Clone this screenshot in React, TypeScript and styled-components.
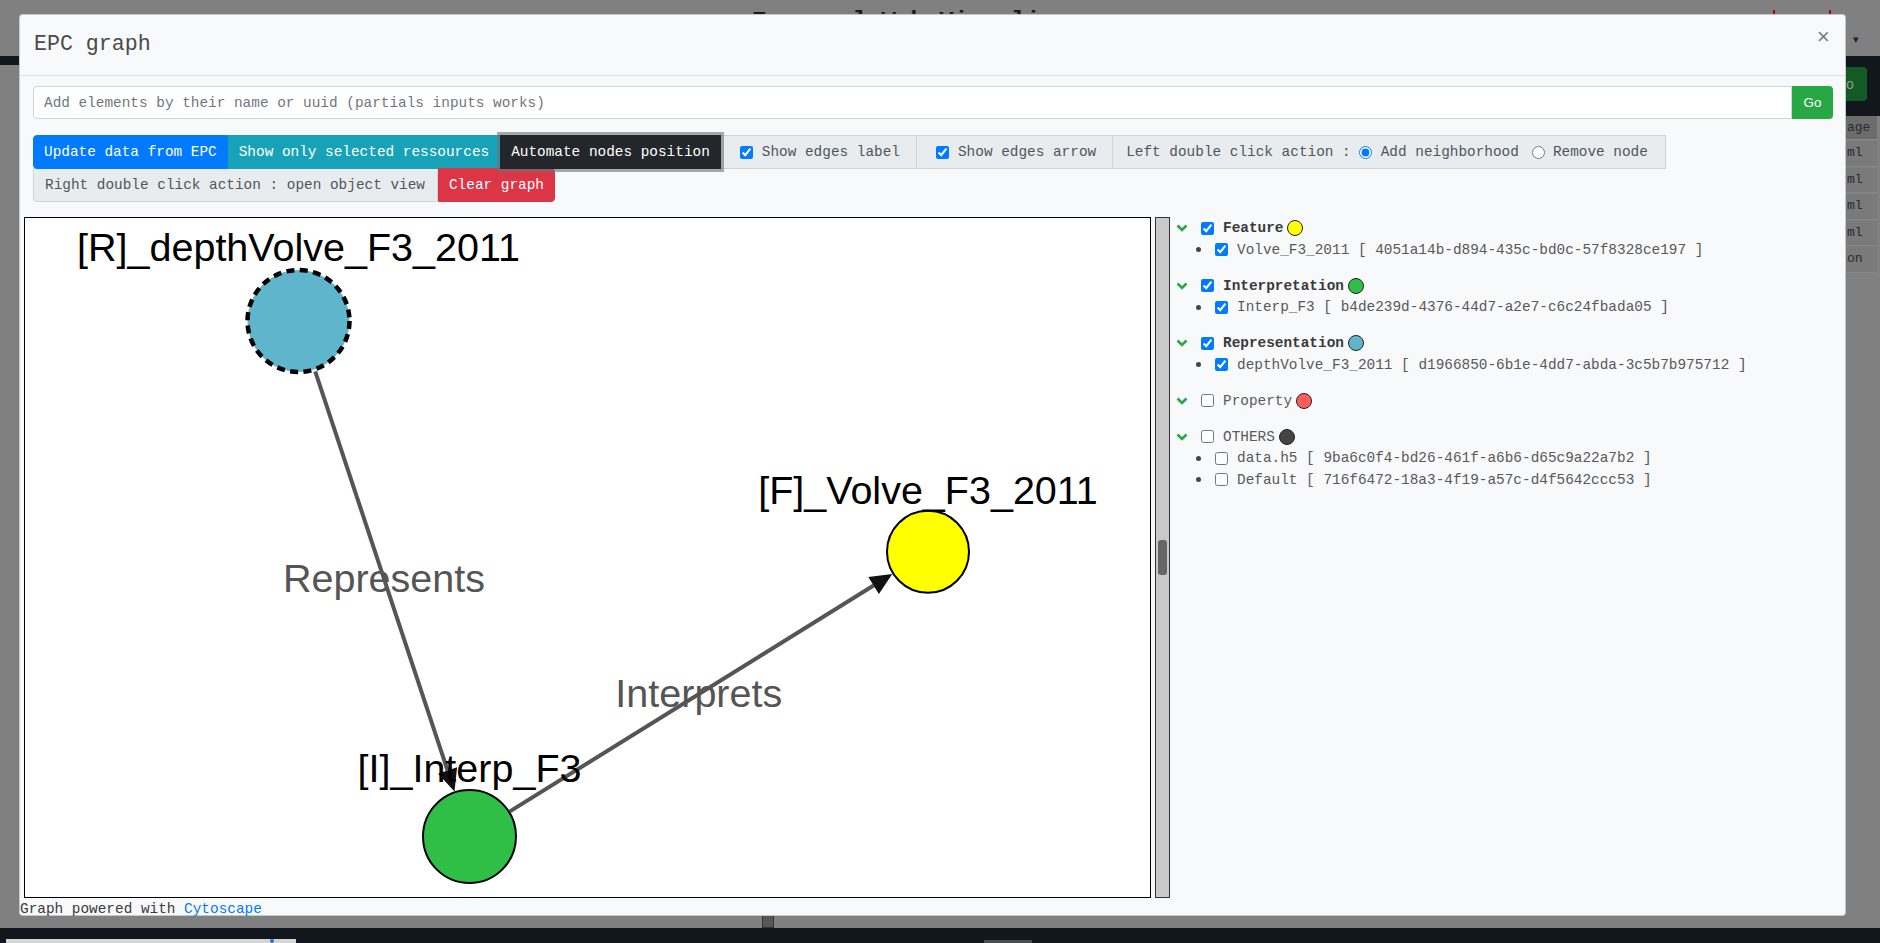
import React from "react";
import styled, { createGlobalStyle } from "styled-components";

const MONO = `"Liberation Mono", "DejaVu Sans Mono", monospace`;
const SANS = `"Liberation Sans", Arial, sans-serif`;
const DARK = "#12161d";

const GlobalStyle = createGlobalStyle`
  html, body { margin: 0; padding: 0; }
  body { font-family: ${MONO}; font-size: 14.4px; overflow: hidden; background: #808080; }
  *, *::before, *::after { box-sizing: border-box; }
`;

/* ---------- page behind the dialog ---------- */
const Page = styled.div`
  position: relative;
  width: 100vw;
  height: 943px;
  background: #808080;
  display: flex;
  flex-direction: column;
  overflow: hidden;
`;
const BackHeader = styled.div`
  height: 56px;
  display: flex;
  align-items: flex-start;
  padding-top: 10px;
`;
const BackTitle = styled.div`
  margin-left: 752px;
  font: bold 24px/1 ${MONO};
  color: #1b1b1b;
  white-space: nowrap;
`;
const BackRight = styled.div`
  margin-left: auto;
  width: 110px;
  display: flex;
  align-items: flex-start;
`;
const RedBar = styled.div<{ $ml: number }>`
  width: 2px;
  height: 6px;
  margin-top: 0;
  margin-left: ${(p) => p.$ml}px;
  background: #b00000;
`;
const Caret = styled.div`
  margin-left: 22px;
  margin-top: 24px;
  font: 11px/1 ${SANS};
  color: #222;
`;
const BackNavLine = styled.div`
  height: 9px;
  background: ${DARK};
`;
const BackMain = styled.div`
  flex: 1;
  display: flex;
  flex-direction: column;
`;
const BackMainTop = styled.div`
  flex: 1;
  display: flex;
`;
const BackFill = styled.div`
  flex: 1;
`;
const BackSide = styled.div`
  width: 34px;
  display: flex;
  flex-direction: column;
`;
const BackDark = styled.div`
  height: 51px;
  background: ${DARK};
  padding-top: 2px;
`;
const DimGo = styled.div`
  width: 21px;
  height: 34px;
  background: #145a26;
  border-radius: 0 4px 4px 0;
  color: #8d9c92;
  font: 14px/34px ${SANS};
`;
const BackCell = styled.div<{ $head?: boolean }>`
  width: 31px;
  height: ${(p) => (p.$head ? 24 : 25.5)}px;
  margin-top: ${(p) => (p.$head ? 0 : 1)}px;
  background: ${(p) => (p.$head ? "#6c6c6c" : "#7a7a7a")};
  border-bottom: 1px solid #888;
  color: #2a2a2a;
  font: 13px/24px ${MONO};
  padding-left: 1px;
  white-space: nowrap;
  overflow: hidden;
`;
const BackMainBottom = styled.div`
  height: 14px;
  padding-left: 762px;
`;
const BackSquare = styled.div`
  width: 12px;
  height: 14px;
  background: #575757;
  border: 1px solid #333;
`;
const BackFooter = styled.div`
  height: 15px;
  background: ${DARK};
  display: flex;
  align-items: flex-end;
`;
const BackStrip = styled.div`
  width: 290px;
  height: 4px;
  margin-left: 6px;
  background: #d4d4d4;
  display: flex;
  justify-content: flex-end;
  padding-right: 22px;
`;
const BackDot = styled.div`
  width: 4px;
  height: 4px;
  border-radius: 50%;
  background: #2a6fd6;
`;
const BackBar = styled.div`
  width: 48px;
  height: 3px;
  margin-left: 688px;
  background: #4a4d52;
`;

/* ---------- dialog ---------- */
const Modal = styled.div`
  position: absolute;
  left: 19px;
  top: 14px;
  width: 1827px;
  height: 902px;
  background: #f8f9fa;
  border: 1px solid rgba(0, 0, 0, 0.2);
  border-radius: 4px;
  display: flex;
  flex-direction: column;
  color: #333;
`;
const Header = styled.div`
  height: 61px;
  flex-shrink: 0;
  display: flex;
  align-items: center;
  padding: 0 15px 0 14px;
  border-bottom: 1px solid #dee2e6;
`;
const Title = styled.div`
  font: 21.6px/1.2 ${MONO};
  color: #4a4a4a;
`;
const Close = styled.div`
  margin-left: auto;
  align-self: flex-start;
  margin-top: 13px;
  font: 22px/1 ${MONO};
  color: #7a7a7a;
`;
const Body = styled.div`
  padding: 10px 12px 0 13px;
  flex-shrink: 0;
`;
const SearchRow = styled.div`
  display: flex;
  height: 33px;
`;
const SearchInput = styled.input`
  flex: 1;
  height: 33px;
  border: 1px solid #ced4da;
  border-radius: 4px 0 0 4px;
  padding: 0 10px;
  font: 14.4px ${MONO};
  color: #495057;
  background: #fff;
  &::placeholder { color: #707780; }
`;
const GoButton = styled.button`
  width: 41px;
  height: 33px;
  border: none;
  border-radius: 0 4px 4px 0;
  background: #28a745;
  color: #fff;
  font: 13.33px ${SANS};
  padding: 0;
`;
const Toolbar = styled.div`
  margin-top: 16px;
  display: flex;
  flex-direction: column;
`;
const ToolRow = styled.div<{ $second?: boolean }>`
  display: flex;
  height: 34px;
  margin-top: ${(p) => (p.$second ? -1 : 0)}px;
`;
const Btn = styled.button<{ $bg: string; $ring?: boolean; $radius?: string }>`
  position: relative;
  z-index: ${(p) => (p.$ring ? 2 : 0)};
  height: 34px;
  padding: 0 10px;
  border: 1px solid ${(p) => p.$bg};
  background: ${(p) => p.$bg};
  color: #fff;
  font: 14.4px ${MONO};
  white-space: nowrap;
  border-radius: ${(p) => p.$radius || "0"};
  box-shadow: ${(p) => (p.$ring ? "0 0 0 3px rgba(110,114,118,0.6)" : "none")};
`;
const Seg = styled.div<{ $pl?: number; $pr?: number; $radius?: string }>`
  height: 34px;
  display: flex;
  align-items: center;
  padding: 0 ${(p) => p.$pr ?? 16}px 0 ${(p) => p.$pl ?? 16}px;
  margin-left: -1px;
  background: #e9ecef;
  border: 1px solid #ced4da;
  border-radius: ${(p) => p.$radius || "0"};
  color: #50565c;
  white-space: nowrap;
`;
const FirstSeg = styled(Seg)`
  margin-left: 0;
`;
const Check = styled.input<{ $ml?: number; $mr?: number }>`
  width: 13px;
  height: 13px;
  margin: 0 ${(p) => p.$mr ?? 9}px 0 ${(p) => p.$ml ?? 0}px;
  accent-color: #007bff;
  flex-shrink: 0;
`;

const GraphRow = styled.div`
  display: flex;
  padding: 15px 0 0 4px;
  flex-shrink: 0;
`;
const Canvas = styled.div`
  width: 1127px;
  height: 681px;
  border: 1px solid #000;
  background: #fff;
  flex-shrink: 0;
`;
const GraphSvg = styled.svg`
  display: block;
  width: 100%;
  height: 100%;
`;
const ScrollTrack = styled.div`
  position: relative;
  width: 15px;
  height: 681px;
  margin-left: 4px;
  background: #c9c9c9;
  border: 1px solid #333;
  flex-shrink: 0;
`;
const ScrollThumb = styled.div`
  position: absolute;
  left: 2px;
  top: 322px;
  width: 9px;
  height: 35px;
  border-radius: 3px;
  background: #666;
`;
const Tree = styled.div`
  flex: 1;
  padding-left: 6px;
`;
const Group = styled.div`
  margin-bottom: 14px;
`;
const GroupHead = styled.div`
  height: 22px;
  display: flex;
  align-items: center;
`;
const Chevron = styled.svg`
  width: 12px;
  height: 8px;
  flex-shrink: 0;
`;
const GroupLabel = styled.span<{ $on: boolean }>`
  font-weight: ${(p) => (p.$on ? 700 : 400)};
  color: ${(p) => (p.$on ? "#3a3a3a" : "#5a5a5a")};
`;
const Dot = styled.span<{ $c: string }>`
  width: 16px;
  height: 16px;
  margin-left: 4px;
  border-radius: 50%;
  background: ${(p) => p.$c};
  border: 1px solid #222;
  flex-shrink: 0;
`;
const Item = styled.div`
  height: 21.5px;
  display: flex;
  align-items: center;
  color: #585858;
  white-space: nowrap;
`;
const Bullet = styled.span`
  width: 5px;
  height: 5px;
  margin-left: 19.5px;
  border-radius: 50%;
  background: #444;
  flex-shrink: 0;
`;
const FooterNote = styled.div`
  padding-top: 4px;
  font: 14.4px/14px ${MONO};
  color: #3a3a3a;
  white-space: nowrap;
`;
const Link = styled.a`
  color: #007bff;
  text-decoration: none;
`;

const NODE_FONT = `"Liberation Sans", Arial, Helvetica, sans-serif`;

type Grp = { name: string; color: string; on: boolean; items: [string, string][] };
const groups: Grp[] = [
  { name: "Feature", color: "#ffff00", on: true, items: [["Volve_F3_2011", "4051a14b-d894-435c-bd0c-57f8328ce197"]] },
  { name: "Interpretation", color: "#2fbf47", on: true, items: [["Interp_F3", "b4de239d-4376-44d7-a2e7-c6c24fbada05"]] },
  { name: "Representation", color: "#5fb6cc", on: true, items: [["depthVolve_F3_2011", "d1966850-6b1e-4dd7-abda-3c5b7b975712"]] },
  { name: "Property", color: "#ff5c5c", on: false, items: [] },
  {
    name: "OTHERS",
    color: "#444",
    on: false,
    items: [
      ["data.h5", "9ba6c0f4-bd26-461f-a6b6-d65c9a22a7b2"],
      ["Default", "716f6472-18a3-4f19-a57c-d4f5642ccc53"],
    ],
  },
];

const Graph = () => (
  <GraphSvg viewBox="1 1 1125 679">
    <g stroke="#555" strokeWidth={4}>
      <line x1={291.2} y1={154.3} x2={423.6} y2={553.5} />
      <line x1={485.9} y1={594.4} x2={849.6} y2={368.5} />
    </g>
    <g fill="#111">
      <polygon points="430.5,574.4 433.1,550.35 414.1,556.65" />
      <polygon points="868.3,356.9 854.9,377.0 844.3,360.0" />
    </g>
    <circle cx={274.5} cy={104} r={51} fill="#5fb6cc" stroke="#000" strokeWidth={4.5} strokeDasharray="8 5.4" />
    <circle cx={445.5} cy={619.5} r={46.5} fill="#30bf46" stroke="#000" strokeWidth={2} />
    <circle cx={904} cy={334.7} r={41} fill="#ffff00" stroke="#000" strokeWidth={2} />
    <g fontFamily={NODE_FONT} fontSize={39.5} textAnchor="middle">
      <text x={274.5} y={44} fill="#000">[R]_depthVolve_F3_2011</text>
      <text x={904} y={287} fill="#000">[F]_Volve_F3_2011</text>
      <text x={445.5} y={565} fill="#000">[I]_Interp_F3</text>
      <text x={360} y={375} fill="#555">Represents</text>
      <text x={674.8} y={490} fill="#555">Interprets</text>
    </g>
  </GraphSvg>
);

export default function App() {
  return (
    <>
      <GlobalStyle />
      <Page>
        <BackHeader>
          <BackTitle>Energyml Web Visualizer</BackTitle>
          <BackRight>
            <RedBar $ml={3} />
            <RedBar $ml={54} />
            <Caret>▾</Caret>
          </BackRight>
        </BackHeader>
        <BackNavLine />
        <BackMain>
          <BackMainTop>
            <BackFill />
            <BackSide>
              <BackDark>
                <DimGo>o</DimGo>
              </BackDark>
              <BackCell $head>age</BackCell>
              <BackCell>ml</BackCell>
              <BackCell>ml</BackCell>
              <BackCell>ml</BackCell>
              <BackCell>ml</BackCell>
              <BackCell>on</BackCell>
            </BackSide>
          </BackMainTop>
          <BackMainBottom>
            <BackSquare />
          </BackMainBottom>
        </BackMain>
        <BackFooter>
          <BackStrip>
            <BackDot />
          </BackStrip>
          <BackBar />
        </BackFooter>

        <Modal>
          <Header>
            <Title>EPC graph</Title>
            <Close>×</Close>
          </Header>
          <Body>
            <SearchRow>
              <SearchInput placeholder="Add elements by their name or uuid (partials inputs works)" />
              <GoButton>Go</GoButton>
            </SearchRow>
            <Toolbar>
              <ToolRow>
                <Btn $bg="#007bff" $radius="4px 0 0 4px">Update data from EPC</Btn>
                <Btn $bg="#17a2b8">Show only selected ressources</Btn>
                <Btn $bg="#23272b" $ring>Automate nodes position</Btn>
                <Seg $pl={19} $pr={16}>
                  <Check type="checkbox" checked readOnly />
                  Show edges label
                </Seg>
                <Seg $pl={19} $pr={16}>
                  <Check type="checkbox" checked readOnly />
                  Show edges arrow
                </Seg>
                <Seg $pl={13} $pr={17}>
                  Left double click action :
                  <Check type="radio" name="ldc" checked readOnly $ml={8} $mr={9} />
                  Add neighborhood
                  <Check type="radio" name="ldc" readOnly $ml={13} $mr={8} />
                  Remove node
                </Seg>
              </ToolRow>
              <ToolRow $second>
                <FirstSeg $pl={11} $pr={12} $radius="0 0 0 4px">Right double click action : open object view</FirstSeg>
                <Btn $bg="#dc3545" $radius="0 4px 4px 0">Clear graph</Btn>
              </ToolRow>
            </Toolbar>
          </Body>
          <GraphRow>
            <Canvas>
              <Graph />
            </Canvas>
            <ScrollTrack>
              <ScrollThumb />
            </ScrollTrack>
            <Tree>
              {groups.map((g) => (
                <Group key={g.name}>
                  <GroupHead>
                    <Chevron viewBox="0 0 12 8">
                      <path d="M1.5 1.5 L6 6 L10.5 1.5" fill="none" stroke="#28a745" strokeWidth={2.6} />
                    </Chevron>
                    <Check type="checkbox" checked={g.on} readOnly $ml={13} $mr={9} />
                    <GroupLabel $on={g.on}>{g.name}</GroupLabel>
                    <Dot $c={g.color} />
                  </GroupHead>
                  {g.items.map(([n, id]) => (
                    <Item key={id}>
                      <Bullet />
                      <Check type="checkbox" checked={g.on} readOnly $ml={14.5} $mr={9} />
                      {n} [ {id} ]
                    </Item>
                  ))}
                </Group>
              ))}
            </Tree>
          </GraphRow>
          <FooterNote>
            Graph powered with <Link href="#">Cytoscape</Link>
          </FooterNote>
        </Modal>
      </Page>
    </>
  );
}
